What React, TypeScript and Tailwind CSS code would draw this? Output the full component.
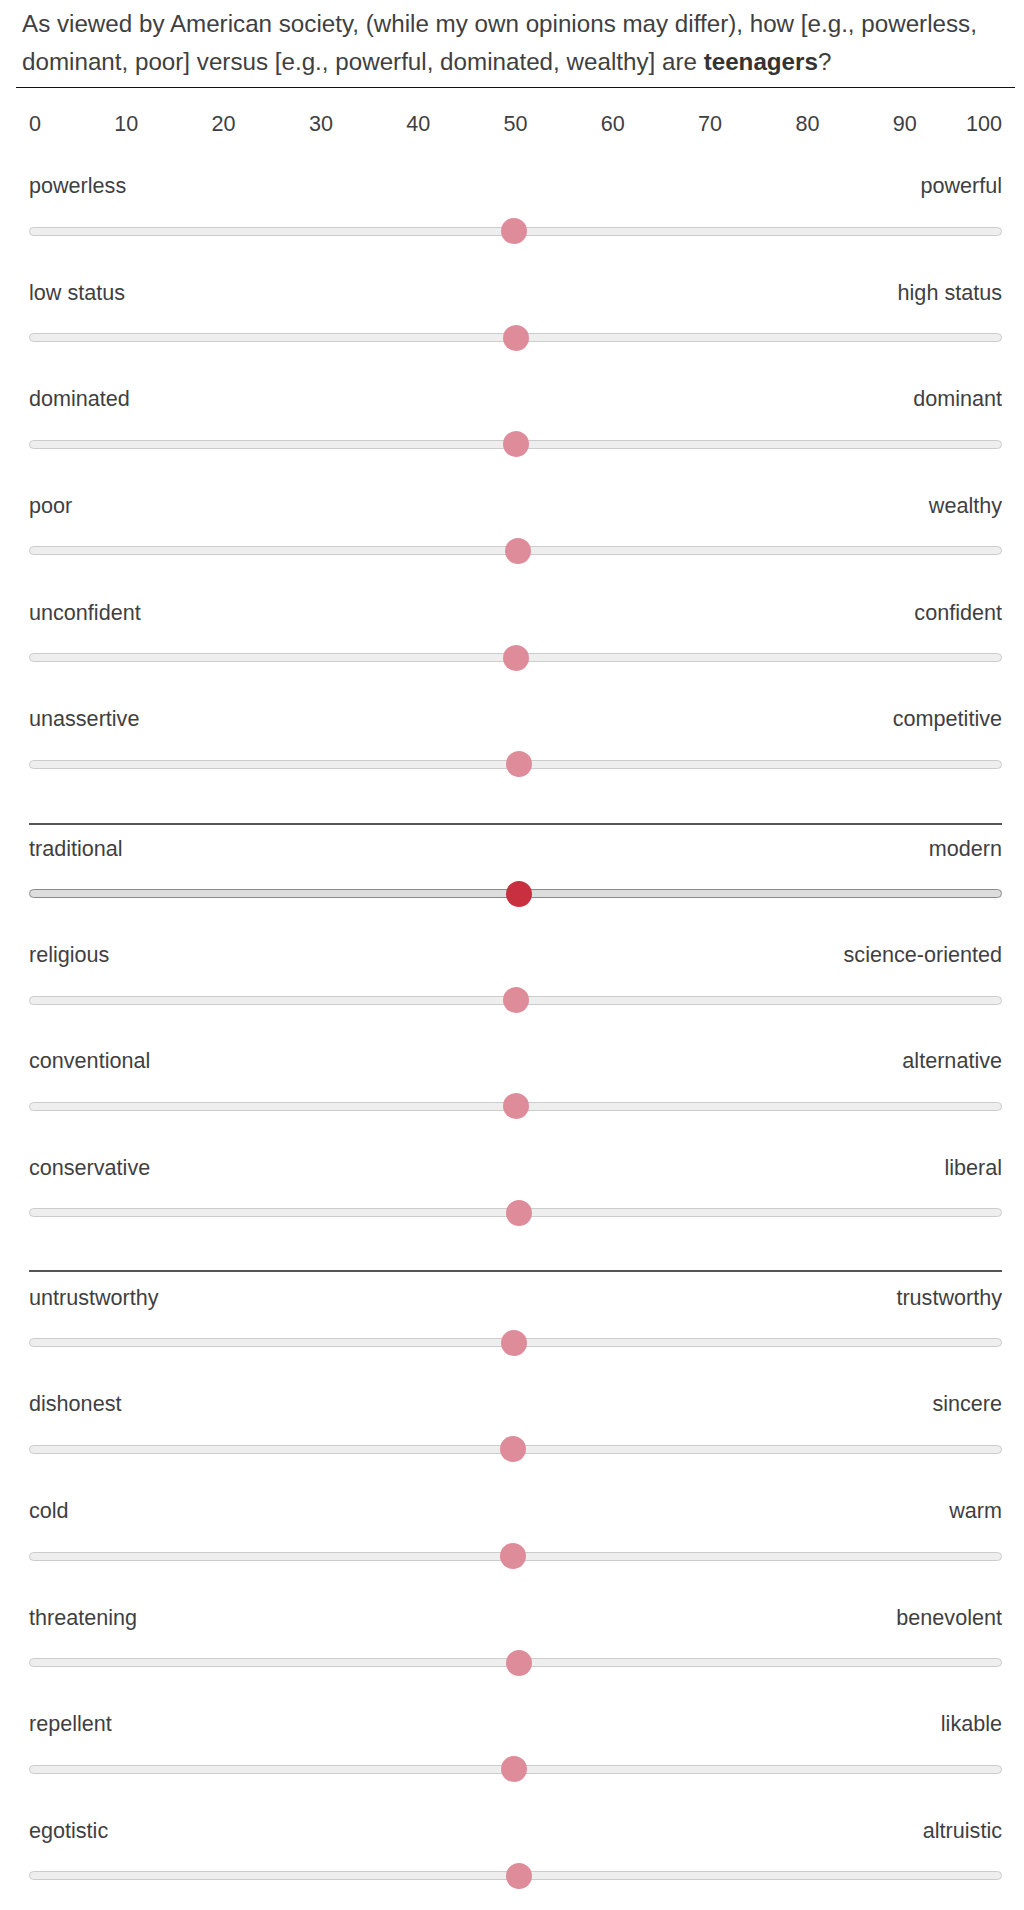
import React from 'react';

type Row = { left: string; right: string; center: number; active?: boolean };

// thumb centers are page x coords, measured from the reference
const sections: Row[][] = [
  [
    { left: 'powerless', right: 'powerful', center: 513.8 },
    { left: 'low status', right: 'high status', center: 516.3 },
    { left: 'dominated', right: 'dominant', center: 516.3 },
    { left: 'poor', right: 'wealthy', center: 517.5 },
    { left: 'unconfident', right: 'confident', center: 516.3 },
    { left: 'unassertive', right: 'competitive', center: 518.7 },
  ],
  [
    { left: 'traditional', right: 'modern', center: 518.7, active: true },
    { left: 'religious', right: 'science-oriented', center: 516.3 },
    { left: 'conventional', right: 'alternative', center: 516.3 },
    { left: 'conservative', right: 'liberal', center: 518.7 },
  ],
  [
    { left: 'untrustworthy', right: 'trustworthy', center: 513.8 },
    { left: 'dishonest', right: 'sincere', center: 512.6 },
    { left: 'cold', right: 'warm', center: 512.6 },
    { left: 'threatening', right: 'benevolent', center: 518.7 },
    { left: 'repellent', right: 'likable', center: 513.8 },
    { left: 'egotistic', right: 'altruistic', center: 518.7 },
  ],
];

const ticks = [0, 10, 20, 30, 40, 50, 60, 70, 80, 90, 100];

function TickLabels() {
  return (
    <div className="relative h-[30px] leading-[30px]">
      {ticks.map((t, i) => {
        const align =
          i === 0 ? 'translate-x-0' : i === ticks.length - 1 ? '-translate-x-full' : '-translate-x-1/2';
        return (
          <span key={t} className={`absolute top-0 ${align}`} style={{ left: `${t}%` }}>
            {t}
          </span>
        );
      })}
    </div>
  );
}

function SliderRow({ row, tight }: { row: Row; tight?: boolean }) {
  return (
    <div className={tight ? 'pb-[32.2px]' : 'pb-[32.67px]'}>
      <div className="flex justify-between h-[30px] leading-[30px]">
        <span>{row.left}</span>
        <span>{row.right}</span>
      </div>
      <div className="relative mt-[16px] h-[28px] flex items-center">
        <div
          className={
            row.active
              ? 'w-full h-[9px] rounded-full bg-[#dddddd] border border-[#8a8a8a]'
              : 'w-full h-[9px] rounded-full bg-[#eeeeee] border border-[#cccccc]'
          }
        />
        <div
          className={
            row.active
              ? 'absolute top-[1px] w-[26px] h-[26px] rounded-full bg-[#c8303f]'
              : 'absolute top-[1px] w-[26px] h-[26px] rounded-full bg-[#df8c9a]'
          }
          style={{ left: row.center - 29 - 13 }}
        />
      </div>
    </div>
  );
}

export default function App() {
  return (
    <div className="min-h-screen w-[1024px] bg-white text-[#3f3f42] font-['Liberation_Sans',Arial,sans-serif] text-[21.6px]">
      <div className="pl-[22px] pr-[9px] pt-[5px] text-[24.2px] leading-[38px] whitespace-nowrap">
        As viewed by American society, (while my own opinions may differ), how [e.g., powerless,
        <br />
        dominant, poor] versus [e.g., powerful, dominated, wealthy] are <b className="font-bold text-[#333]">teenagers</b>?
      </div>
      <div className="ml-[16px] mr-[9px] mt-[5.5px] h-[1.5px] bg-[#111]" />

      <div className="pl-[29px] pr-[22px] mt-[21px]">
        <TickLabels />
        <div className="mt-[32px]">
          {sections.map((rows, s) => (
            <div key={s}>
              {s === 1 && <div className="h-[1.5px] bg-[#555] mt-[12.5px] mb-[9px]" />}
              {s === 2 && <div className="h-[1.5px] bg-[#555] mt-[11.5px] mb-[11px]" />}
              {rows.map((r) => (
                <SliderRow key={r.left} row={r} tight={s === 1} />
              ))}
            </div>
          ))}
        </div>
      </div>
    </div>
  );
}
